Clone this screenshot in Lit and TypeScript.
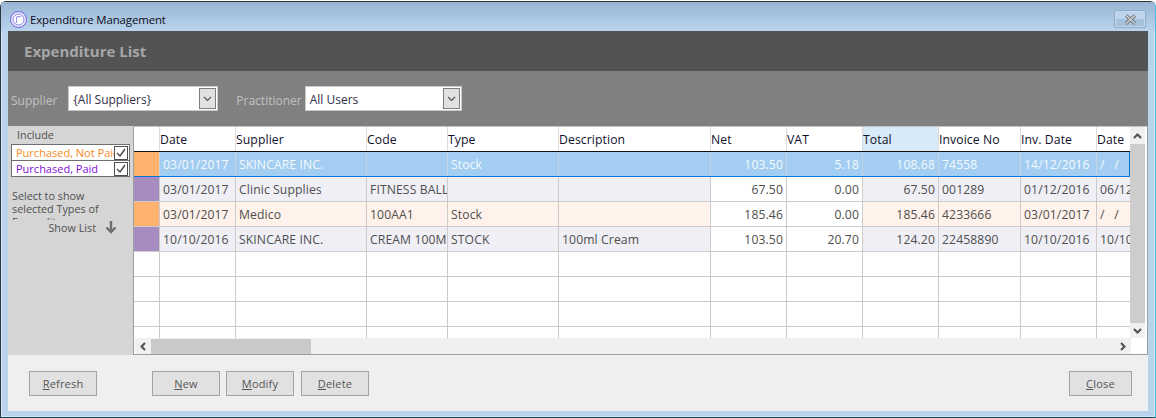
import { LitElement, html, css, svg } from "lit";
import { customElement } from "lit/decorators.js";

const COLS = [26, 76, 131, 81, 111, 152, 76, 76, 76, 82, 76, 33];
const HEAD = ["", "Date", "Supplier", "Code", "Type", "Description", "Net", "VAT", "Total", "Invoice No", "Inv. Date", "Date"];
type Row = { kind: string; cells: string[] };
const ROWS: Row[] = [
  { kind: "sel", cells: ["", "03/01/2017", "SKINCARE INC.", "", "Stock", "", "103.50", "5.18", "108.68", "74558", "14/12/2016", "/   /"] },
  { kind: "pur", cells: ["", "03/01/2017", "Clinic Supplies", "FITNESS BALL", "", "", "67.50", "0.00", "67.50", "001289", "01/12/2016", "06/12/2016"] },
  { kind: "org", cells: ["", "03/01/2017", "Medico", "100AA1", "Stock", "", "185.46", "0.00", "185.46", "4233666", "03/01/2017", "/   /"] },
  { kind: "pur", cells: ["", "10/10/2016", "SKINCARE INC.", "CREAM 100ML", "STOCK", "100ml Cream", "103.50", "20.70", "124.20", "22458890", "10/10/2016", "10/10/2016"] },
];
const NUM = new Set([6, 7, 8]);

const chevDown = svg`<path d="M1 1 L4.5 4.5 L8 1" fill="none" stroke="currentColor" stroke-width="1.2"/>`;

@customElement("app-root")
export class AppRoot extends LitElement {
  static styles = css`
    :host { display: block; width: 1156px; height: 418px; overflow: hidden; background: #fff; font-family: "Open Sans", "Noto Sans", sans-serif; font-size: 12px; }
    * { box-sizing: border-box; }
    .win { width: 1156px; height: 417px; background: #b9d3ec; border: 1px solid #2a3a44; border-top-color: #333; border-bottom-color: #174a55; border-right-color: #35c4dc; border-radius: 6px 6px 0 0; display: flex; flex-direction: column; padding: 0 7px 6px 7px; box-shadow: inset 0 0 0 1px #d4e6f6; margin-top: 1px; }
    .title { height: 29px; flex: none; display: flex; align-items: center; gap: 3px; margin: 0 -7px; padding: 5px 6px 0 9px; background: linear-gradient(#98b6d4, #b9d3ec); color: #0c0c1c; font-size: 11.4px; letter-spacing: -0.1px; }
    .logo { width: 17px; height: 17px; flex: none; }
    .title span { flex: 1; }
    .xbtn { width: 32px; height: 18px; margin: 0 3px 0 0; border: 1px solid #8fabc7; border-radius: 2px; background: linear-gradient(#bdd4ec 0 50%, #a5c1dc 50%); display: flex; align-items: center; justify-content: center; box-shadow: inset 0 0 0 1px #c4d9ee; }
    .head { height: 40px; flex: none; background: #535353; color: #a6a6a6; font-weight: 700; font-size: 15px; display: flex; align-items: center; padding-left: 16px; }
    .filter { height: 55px; flex: none; background: #808080; display: flex; align-items: center; padding: 0 0 0 3px; color: #c0c0c0; }
    .filter > span { padding-top: 3px; }
    .combo { height: 25px; background: #fff; border: 1px solid #c9c9c9; display: flex; align-items: center; color: #303048; padding-left: 4px; }
    .combo .t { flex: 1; padding-top: 1px; }
    .combo .b { width: 17px; height: 21px; margin-right: 1px; border: 1px solid #7d7d7d; background: #e1e1e1; color: #555; display: flex; align-items: center; justify-content: center; }
    .c1 { width: 150px; margin-left: 11px; margin-right: 18px; }
    .c2 { width: 157px; margin-left: 3px; }
    .mid { height: 229px; flex: none; display: flex; }
    .side { width: 125px; flex: none; background: #d5d5d5; color: #505050; font-size: 10.8px; padding: 1px 3px 0 3px; overflow: hidden; }
    .inc { padding-left: 6px; height: 16px; line-height: 15px; }
    .checks { width: 119px; margin-top: 1px; border: 1px solid #6f6f6f; background: #6f6f6f; display: flex; flex-direction: column; gap: 1px; }
    .chk { height: 15px; background: #fff; display: flex; align-items: center; padding-left: 4px; padding-right: 1px; font-size: 11px; overflow: hidden; }
    .chk .l { flex: 1; white-space: nowrap; overflow: hidden; }
    .orange { color: #f58a1f; }
    .purple { color: #7d10d8; }
    .box { width: 14px; height: 14px; flex: none; border: 1px solid #505050; background: #fff; display: flex; align-items: center; justify-content: center; }
    .note { margin-top: 12px; padding-left: 1px; line-height: 13px; height: 31px; overflow: hidden; }
    .show { display: flex; justify-content: flex-end; align-items: center; gap: 9px; padding-right: 13px; margin-top: -2px; height: 18px; }
    .grid { width: 1015px; flex: none; background: #fff; border: 1px solid #9e9e9e; border-top-color: #c4c4c4; display: flex; flex-direction: column; }
    .gridmid { display: flex; flex: 1; min-height: 0; }
    .rows { width: 996px; flex: none; overflow: hidden; }
    .r { display: flex; height: 25px; border-bottom: 1px solid #cbcbcb; font-size: 12.2px; letter-spacing: 0.1px; }
    .r.h { height: 25px; border-bottom: 1px solid #111; color: #10102a; }
    .c { flex: none; border-right: 1px solid #cbcbcb; padding: 1px 1px 0 1px; line-height: 24px; white-space: pre; overflow: hidden; }
    .r.h .c { padding-left: 0; border-right-color: #dcdcdc; }
    .r.h .c.tot { background: #d8e9f8; }
    .r.h .c:last-child, .r .c:last-child { border-right: 0; }
    .r:not(.h) .c { color: #4e4e4e; padding-left: 3px; padding-right: 3px; }
    .c.n { text-align: right; }
    .r.sel { background: #a3cef1; border-bottom: 1px solid #0078d7; box-shadow: inset 1px 0 #0078d7, inset -1px 0 #0078d7; }
    .r.sel .c { color: #f4f9fd !important; border-right-color: #c4d4e0; }
    .r.sel .swatch, .r.org .swatch { background: #ffb16e; }
    .r.pur .swatch { background: #a68cc0; }
    .r.pur .tint { background: #f0eff6; }
    .r.org .tint { background: #fef2ea; }
    .r.blank:last-child { height: 11px; border-bottom: 0; }
    .vs { width: 15px; flex: none; background: #f0f0f0; display: flex; flex-direction: column; color: #505050; }
    .vs .a { height: 17px; display: flex; align-items: center; justify-content: center; flex: none; }
    .vs .a.dn { height: 15px; }
    .vs .th { flex: 1; background: #cdcdcd; }
    .hs { height: 16px; flex: none; background: #f0f0f0; display: flex; align-items: center; margin-left: 1px; margin-right: 16px; color: #505050; }
    .hs .a { width: 16px; height: 16px; display: flex; align-items: center; justify-content: center; flex: none; }
    .hs .th { width: 160px; height: 15px; background: #c9c9c9; flex: none; }
    .hs .sp { flex: 1; }
    .foot { flex: 1; background: #efefef; display: flex; align-items: center; padding: 1px 16px 0 21px; }
    .btn { width: 68px; height: 25px; border: 1px solid #a3a3a3; background: #e1e1e1; color: #555; font-size: 11px; display: flex; align-items: center; justify-content: center; letter-spacing: .2px; }
    .btn u { text-underline-offset: 1px; }
    .g1 { margin-left: 55px; }
    .g2 { margin-left: 6px; }
    .g3 { margin-left: 7px; }
    .cl { width: 63px; }
    .sp { flex: 1; }
  `;

  private cellClass(row: Row, i: number) {
    if (i === 0) return "swatch";
    if (row.kind === "sel") return NUM.has(i) ? "n" : "";
    if (i === 6 || i === 7) return "n";
    if (i === 8) return "n tint";
    return "tint";
  }

  private btn(first: string, rest: string, cls = "") {
    return html`<div class="btn ${cls}"><u>${first}</u>${rest}</div>`;
  }

  render() {
    const blanks = [0, 1, 2, 3];
    return html`<div class="win">
      <div class="title">
        <svg class="logo" viewBox="0 0 17 17"><circle cx="8.5" cy="8.5" r="8" fill="#e9e6fb" stroke="#6a5fe0" stroke-width="1"/><circle cx="8.5" cy="8.5" r="5.4" fill="#fff" stroke="#8f88e8" stroke-width="1"/><path d="M6.5 12V7.2a1.6 1.6 0 0 1 1.6-1.6h2.6" fill="none" stroke="#9a94ea" stroke-width="1.2"/></svg>
        <span>Expenditure Management</span>
        <div class="xbtn"><svg width="13" height="11" viewBox="0 0 13 11"><path d="M2 1.5 L11 9.5 M11 1.5 L2 9.5" stroke="#5c6470" stroke-width="3.4"/><path d="M2 1.5 L11 9.5 M11 1.5 L2 9.5" stroke="#c8c8c8" stroke-width="1.7"/></svg></div>
      </div>
      <div class="head">Expenditure List</div>
      <div class="filter">
        <span>Supplier</span>
        <div class="combo c1"><span class="t">{All Suppliers}</span><div class="b"><svg width="9" height="6">${chevDown}</svg></div></div>
        <span>Practitioner</span>
        <div class="combo c2"><span class="t">All Users</span><div class="b"><svg width="9" height="6">${chevDown}</svg></div></div>
      </div>
      <div class="mid">
        <div class="side">
          <div class="inc">Include</div>
          <div class="checks">
            <div class="chk"><span class="l orange">Purchased, Not Paid</span><span class="box"><svg width="12" height="12"><path d="M2 6 L5 9 L10 2" fill="none" stroke="#404040" stroke-width="1.3"/></svg></span></div>
            <div class="chk"><span class="l purple">Purchased, Paid</span><span class="box"><svg width="12" height="12"><path d="M2 6 L5 9 L10 2" fill="none" stroke="#404040" stroke-width="1.3"/></svg></span></div>
          </div>
          <div class="note">Select to show<br />selected Types of<br />Expenditure</div>
          <div class="show"><span>Show List</span><svg width="12" height="14" viewBox="0 0 12 14"><path d="M6 1 V12 M1.5 7.5 L6 12 L10.5 7.5" fill="none" stroke="#6e6e6e" stroke-width="2.4"/></svg></div>
        </div>
        <div class="grid">
          <div class="gridmid">
            <div class="rows">
              <div class="r h">${HEAD.map((t, i) => html`<div class="c ${i === 8 ? "tot" : ""}" style="width:${COLS[i]}px">${t}</div>`)}</div>
              ${ROWS.map((row) => html`<div class="r ${row.kind}">${row.cells.map((t, i) => html`<div class="c ${this.cellClass(row, i)}" style="width:${COLS[i]}px">${t}</div>`)}</div>`)}
              ${blanks.map(() => html`<div class="r blank">${COLS.map((w) => html`<div class="c" style="width:${w}px"></div>`)}</div>`)}
              <div class="r blank">${COLS.map((w) => html`<div class="c" style="width:${w}px"></div>`)}</div>
            </div>
            <div class="vs">
              <div class="a"><svg width="9" height="6"><path d="M1 5 L4.5 1.5 L8 5" fill="none" stroke="currentColor" stroke-width="2"/></svg></div>
              <div class="th"></div>
              <div class="a dn"><svg width="9" height="6"><path d="M1 1 L4.5 4.5 L8 1" fill="none" stroke="currentColor" stroke-width="2"/></svg></div>
            </div>
          </div>
          <div class="hs">
            <div class="a"><svg width="6" height="9"><path d="M5 1 L1.5 4.5 L5 8" fill="none" stroke="currentColor" stroke-width="2"/></svg></div>
            <div class="th"></div><div class="sp"></div>
            <div class="a"><svg width="6" height="9"><path d="M1 1 L4.5 4.5 L1 8" fill="none" stroke="currentColor" stroke-width="2"/></svg></div>
          </div>
        </div>
      </div>
      <div class="foot">
        ${this.btn("R", "efresh")}
        ${this.btn("N", "ew", "g1")}
        ${this.btn("M", "odify", "g2")}
        ${this.btn("D", "elete", "g3")}
        <div class="sp"></div>
        ${this.btn("C", "lose", "cl")}
      </div>
    </div>`;
  }
}
